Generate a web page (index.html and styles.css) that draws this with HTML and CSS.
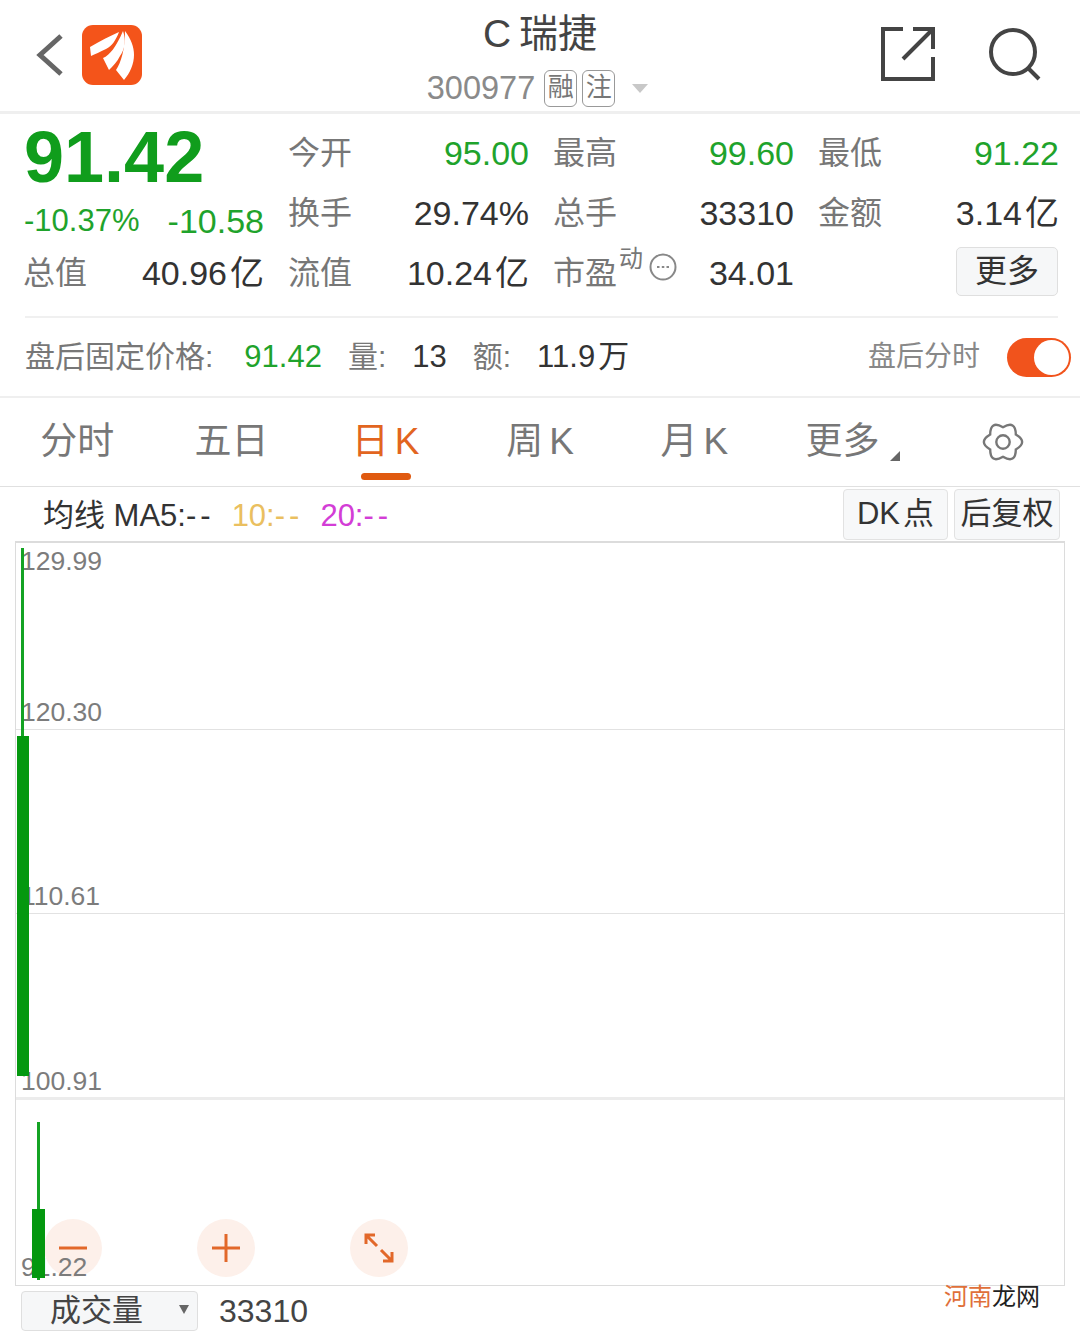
FILE: index.html
```html
<!DOCTYPE html>
<html lang="zh-CN">
<head>
    <meta charset="UTF-8">
    <title>C瑞捷 300977</title>
    <link rel="stylesheet" href="styles.css">
</head>
<body>
    <div class="page">
        <header class="header">
            <div class="header-left">
                <svg class="back" viewBox="0 0 28 44"><path d="M25 3 L4 22 L25 41"/></svg>
                <svg class="logo" viewBox="0 0 60 60">
                    <rect width="60" height="60" rx="11" fill="#f4541a"/>
                    <path fill="#fff" d="M8 22 C18 16 28 11 37 7 C34 15 30 21 24 24 C18 27 13 29 9 31 Z"/>
                    <path fill="#fff" d="M21 33 C28 30 34 22 41 6 C44 15 43 24 38 31 C35 37 31 41 27 45 Z"/>
                    <path fill="#fff" d="M34 45 C39 38 43 24 43 6 C49 14 52 22 52 30 C52 39 48 48 42 55 Z"/>
                </svg>
            </div>
            <div class="title-box">
                <div class="title">C<span class="title-name">瑞捷</span></div>
                <div class="code-row">
                    <span class="code">300977</span>
                    <span class="tag">融</span>
                    <span class="tag">注</span>
                    <span class="tri"></span>
                </div>
            </div>
            <div class="header-right">
                <svg class="ico-share" viewBox="0 0 54 54"><path d="M22 2 H2 V52 H52 V30 M32 2 H52 V22 M52 2 L22 32"/></svg>
                <svg class="ico-search" viewBox="0 0 54 54"><circle cx="25" cy="25" r="22"/><path d="M40 41 L51 52"/></svg>
            </div>
        </header>

        <section class="quote">
            <div class="cell price">91.42</div>
            <div class="cell"><span class="lb">今开</span><span class="val down">95.00</span></div>
            <div class="cell"><span class="lb">最高</span><span class="val down">99.60</span></div>
            <div class="cell"><span class="lb">最低</span><span class="val down">91.22</span></div>

            <div class="cell change"><span class="pct down">-10.37%</span><span class="val down">-10.58</span></div>
            <div class="cell"><span class="lb">换手</span><span class="val">29.74%</span></div>
            <div class="cell"><span class="lb">总手</span><span class="val">33310</span></div>
            <div class="cell"><span class="lb">金额</span><span class="val">3.14<span class="cjk-gap">亿</span></span></div>

            <div class="cell"><span class="lb">总值</span><span class="val">40.96<span class="cjk-gap">亿</span></span></div>
            <div class="cell"><span class="lb">流值</span><span class="val">10.24<span class="cjk-gap">亿</span></span></div>
            <div class="cell">
                <span class="lb pe">市盈<span class="pe-sup">动</span>
                    <svg class="ico-more" viewBox="0 0 28 28"><circle cx="14" cy="14" r="12.5"/><path d="M8 14h2.500M12.800 14h2.500M17.500 14h2.500"/></svg>
                </span>
                <span class="val">34.01</span>
            </div>
            <div class="cell end"><span class="more-btn">更多</span></div>
        </section>

        <div class="divider"></div>

        <div class="after">
            <div class="after-info">
                <span class="lb-sm">盘后固定价格:</span><span class="num down">91.42</span>
                <span class="lb-sm">量:</span><span class="num">13</span>
                <span class="lb-sm">额:</span><span class="num">11.9<span class="cjk-gap">万</span></span>
            </div>
            <div class="after-switch">
                <span class="switch-label">盘后分时</span>
                <span class="switch"><span class="knob"></span></span>
            </div>
        </div>

        <nav class="tabs">
            <span class="tab">分时</span>
            <span class="tab">五日</span>
            <span class="tab active">日<span class="k">K</span></span>
            <span class="tab">周<span class="k">K</span></span>
            <span class="tab">月<span class="k">K</span></span>
            <span class="tab tab-more">更多<i class="corner"></i></span>
            <span class="tab tab-gear">
                <svg class="ico-gear" viewBox="-1 -1 46 46"><path d="M35.400 14.200 Q48.600 22 35.400 29.800 Q35.300 45 22 37.500 Q8.700 45 8.600 29.800 Q-4.600 22 8.600 14.200 Q8.700 -1 22 6.500 Q35.300 -1 35.400 14.200 Z"/><circle cx="22" cy="22" r="7"/></svg>
            </span>
        </nav>

        <div class="ma-row">
            <div class="ma-text">
                <span class="ma-lb">均线 MA5:<span class="dash">--</span></span>
                <span class="ma10">10:<span class="dash">--</span></span>
                <span class="ma20">20:<span class="dash">--</span></span>
            </div>
            <div class="ma-btns">
                <span class="ma-btn btn-dk">DK<span class="cjk-gap">点</span></span>
                <span class="ma-btn btn-fq">后复权</span>
            </div>
        </div>

        <div class="chart">
            <div class="zoom-btns">
                <span class="zoom"><svg viewBox="0 0 30 30"><path d="M1 15H29"/></svg></span>
                <span class="zoom"><svg viewBox="0 0 30 30"><path d="M1 15H29M15 1V29"/></svg></span>
                <span class="zoom"><svg viewBox="0 0 30 30"><path d="M2 11V2H11M2 2L13 13M28 19V28H19M28 28L17 17"/></svg></span>
            </div>

            <div class="band band1"><span class="axis">129.99</span><span class="axis">120.30</span></div>
            <div class="band band2"><span class="axis">110.61</span></div>
            <div class="band band3"><span class="axis">100.91</span></div>
            <div class="band band4"><span class="axis">91.22</span></div>

            <span class="wick wick1"></span>
            <span class="body body1"></span>
            <span class="wick wick2"></span>
            <span class="body body2"></span>
        </div>

        <div class="vol-row">
            <span class="vol-select">成交量<i class="vol-tri"></i></span>
            <span class="vol-num">33310</span>
        </div>

        <div class="watermark"><span class="wm-o">河南</span>龙网</div>
    </div>
</body>
</html>
```

FILE: styles.css
```css
* {
    box-sizing: border-box;
}
body {
    margin: 0;
    background: #fff;
    font-family: "Liberation Sans", "Noto Sans CJK SC", sans-serif;
    color: #333;
}
.page {
    position: relative;
    width: 1080px;
    height: 1331px;
    overflow: hidden;
}
.down {
    color: #1fa32c;
}
.cjk-gap {
    margin-left: 3px;
}

/* header */
.header {
    height: 114px;
    border-bottom: 3px solid #efefef;
    display: grid;
    grid-template-columns: 1fr auto 1fr;
    align-items: center;
}
.header-left {
    display: flex;
    align-items: center;
    gap: 18px;
    padding-left: 36px;
    margin-top: -2px;
}
.back {
    width: 28px;
    height: 46px;
    fill: none;
    stroke: #666;
    stroke-width: 5;
}
.logo {
    width: 60px;
    height: 60px;
}
.title-box {
    align-self: start;
    padding-top: 12px;
    text-align: center;
}
.title {
    font-size: 39px;
    line-height: 44px;
    color: #444;
}
.title-name {
    margin-left: 8px;
}
.code-row {
    display: flex;
    align-items: center;
    justify-content: center;
    margin: 14px 0 0 -5px;
    height: 37px;
}
.code {
    font-size: 32.5px;
    line-height: 37px;
    color: #8a8a8a;
    margin-right: 9px;
}
.tag {
    width: 33px;
    height: 37px;
    border: 1.5px solid #999;
    border-radius: 6px;
    font-size: 26px;
    line-height: 33px;
    text-align: center;
    color: #777;
    margin-right: 5px;
    overflow: hidden;
}
.tri {
    width: 0;
    height: 0;
    border-left: 8px solid transparent;
    border-right: 8px solid transparent;
    border-top: 9px solid #c8c8c8;
    margin-left: 12px;
}
.header-right {
    display: flex;
    justify-content: flex-end;
    gap: 53px;
    padding-right: 38px;
    margin-top: -3px;
}
.ico-share,
.ico-search {
    width: 54px;
    height: 54px;
    fill: none;
    stroke: #444;
    stroke-width: 4;
}

/* quote block */
.quote {
    display: grid;
    grid-template-columns: repeat(4, 240px);
    grid-auto-rows: 60px;
    column-gap: 25px;
    padding: 9px 21px 0 24px;
    height: 202px;
}
.cell {
    display: flex;
    justify-content: space-between;
    align-items: center;
    white-space: nowrap;
}
.cell.end {
    justify-content: flex-end;
}
.price {
    font-size: 72px;
    line-height: 72px;
    font-weight: bold;
    color: #109d1c;
    padding-top: 8px;
}
.change {
    padding-top: 16px;
}
.lb {
    font-size: 32px;
    line-height: 40px;
    color: #777;
    margin-left: -1px;
}
.val {
    font-size: 34px;
    line-height: 40px;
    color: #333;
}
.val.down {
    color: #1fa32c;
}
.pct {
    font-size: 31px;
    line-height: 40px;
}
.pe {
    display: flex;
    align-items: center;
}
.pe-sup {
    font-size: 24px;
    line-height: 24px;
    margin: -28px 6px 0 2px;
}
.ico-more {
    width: 28px;
    height: 28px;
    fill: none;
    stroke: #888;
    stroke-width: 2;
    margin-top: -12px;
}
.more-btn {
    width: 102px;
    height: 49px;
    background: #f6f7f8;
    border: 1px solid #dfdfdf;
    border-radius: 5px;
    font-size: 32px;
    line-height: 46px;
    text-align: center;
    margin: -3px 1px 0 0;
}

/* after hours */
.divider {
    height: 2px;
    margin: 0 22px 0 25px;
    background: #f0f0f0;
}
.after {
    height: 80px;
    padding-left: 25px;
    border-bottom: 2px solid #efefef;
    display: flex;
    justify-content: space-between;
    align-items: center;
}
.after-info {
    display: flex;
    align-items: baseline;
    line-height: 40px;
}
.lb-sm {
    font-size: 30px;
    color: #777;
}
.lb-sm:first-child {
    margin-right: 5px;
}
.num {
    font-size: 31px;
    margin: 0 26px;
}
.after-switch {
    display: flex;
    align-items: center;
    gap: 27px;
    padding-right: 9px;
}
.switch-label {
    font-size: 28px;
    line-height: 40px;
    color: #888;
}
.switch {
    display: flex;
    justify-content: flex-end;
    align-items: center;
    width: 64px;
    height: 39px;
    border-radius: 20px;
    background: #f1531c;
    padding-right: 2px;
}
.knob {
    width: 35px;
    height: 35px;
    border-radius: 50%;
    background: #fff;
}

/* tabs */
.tabs {
    display: grid;
    grid-template-columns: repeat(7, 1fr);
    height: 89px;
    border-bottom: 1px solid #e0e0e0;
    align-items: center;
}
.tab {
    position: relative;
    display: block;
    height: 44px;
    font-size: 37px;
    line-height: 44px;
    text-align: center;
    color: #777;
}
.k {
    margin-left: 6px;
}
.active {
    color: #e2651f;
}
.active::after {
    content: "";
    position: absolute;
    left: 50%;
    top: 53px;
    width: 50px;
    height: 7px;
    margin-left: -25px;
    border-radius: 4px;
    background: #e05a10;
}
.tab-more {
    padding-right: 12px;
}
.corner {
    position: absolute;
    left: 119px;
    top: 31px;
    width: 0;
    height: 0;
    border-left: 10px solid transparent;
    border-bottom: 10px solid #666;
}
.ico-gear {
    width: 44px;
    height: 44px;
    fill: none;
    stroke: #777;
    stroke-width: 2.5;
}

/* ma row */
.ma-row {
    height: 54px;
    display: flex;
    justify-content: space-between;
    align-items: center;
    padding: 0 20px 0 43px;
}
.ma-text {
    display: flex;
    align-items: baseline;
    gap: 17px;
    font-size: 31px;
    line-height: 40px;
    color: #333;
    margin-top: 3px;
}
.dash {
    letter-spacing: 4px;
}
.ma10 {
    color: #eabf60;
}
.ma20 {
    color: #d33dd6;
}
.ma-btns {
    display: flex;
    gap: 6px;
}
.ma-btn {
    height: 51px;
    background: #f7f8f9;
    border: 1px solid #e2e2e2;
    border-radius: 4px;
    font-size: 31px;
    line-height: 48px;
    text-align: center;
}
.btn-dk {
    width: 105px;
}
.btn-fq {
    width: 106px;
}

/* chart */
.chart {
    position: relative;
    width: 1050px;
    height: 745px;
    margin-left: 15px;
    border: 1px solid #dcdcdc;
    border-top-width: 2px;
}
.band {
    display: flex;
    flex-direction: column;
    justify-content: flex-end;
    padding-left: 5px;
    border-bottom: 1px solid #e2e2e2;
}
.band1 {
    height: 187px;
    justify-content: space-between;
}
.band2 {
    height: 184px;
}
.band3 {
    height: 186px;
    border-bottom: 3px solid #ececec;
}
.band4 {
    height: 185px;
    border-bottom: 0;
}
.axis {
    position: relative;
    font-size: 26.5px;
    line-height: 34px;
    color: #7c7c7c;
}
.band1 .axis:first-child {
    margin-top: 1px;
}
.band3 .axis {
    margin-bottom: -1px;
}
.band4 .axis {
    margin-bottom: 1px;
}
.wick,
.body {
    position: absolute;
}
.wick {
    background: #14a323;
}
.body {
    background: #04980f;
}
.wick1 {
    left: 5px;
    top: 5px;
    width: 3px;
    height: 190px;
}
.body1 {
    left: 1px;
    top: 193px;
    width: 12px;
    height: 340px;
}
.wick2 {
    left: 21px;
    top: 579px;
    width: 3px;
    height: 158px;
}
.body2 {
    left: 16px;
    top: 666px;
    width: 13px;
    height: 69px;
}
.zoom-btns {
    position: absolute;
    left: 28px;
    top: 676px;
    display: flex;
    gap: 95px;
}
.zoom {
    display: flex;
    justify-content: center;
    align-items: center;
    width: 58px;
    height: 58px;
    border-radius: 50%;
    background: #fdf0ea;
}
.zoom svg {
    width: 30px;
    height: 30px;
    fill: none;
    stroke: #e2682a;
    stroke-width: 3;
}

/* volume */
.vol-row {
    display: flex;
    align-items: flex-start;
    height: 45px;
    padding: 5px 0 0 21px;
    gap: 21px;
}
.vol-select {
    position: relative;
    width: 177px;
    height: 40px;
    background: #f6f7f8;
    border: 1px solid #dfdfdf;
    border-radius: 4px;
    font-size: 31px;
    line-height: 38px;
    padding-left: 28px;
    color: #444;
}
.vol-tri {
    position: absolute;
    right: 8px;
    top: 13px;
    width: 0;
    height: 0;
    border-left: 5px solid transparent;
    border-right: 5px solid transparent;
    border-top: 9px solid #666;
}
.vol-num {
    font-size: 32px;
    line-height: 40px;
    color: #444;
}

.watermark {
    position: absolute;
    right: 40px;
    bottom: 20px;
    font-size: 24px;
    line-height: 28px;
    color: #222;
}
.wm-o {
    color: #e0703a;
}
```
